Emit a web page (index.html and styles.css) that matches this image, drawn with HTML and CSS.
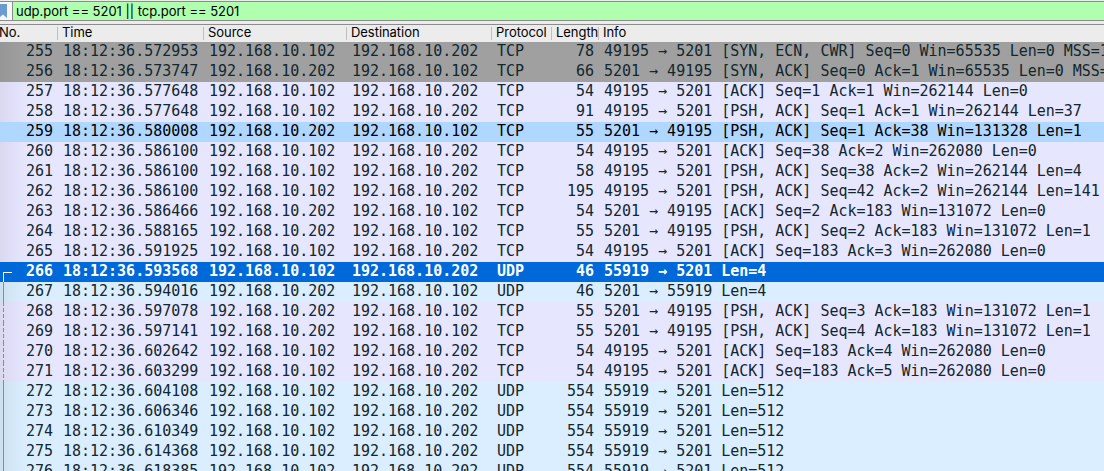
FILE: index.html
```html
<!DOCTYPE html>
<html lang="en">
<head>
  <meta charset="UTF-8">
  <title>Packet list</title>
  <link rel="stylesheet" href="styles.css">
</head>
<body>

  <div class="filter-bar">
    <div class="bookmark">
      <svg width="8" height="16" viewBox="0 0 8 16"><path d="M0 0H7V14L3 10.5L0 13Z" fill="#6c9bd0"/></svg>
    </div>
    <div class="filter-text">udp.port == 5201 || tcp.port == 5201</div>
  </div>

  <table class="packets">
    <colgroup>
      <col class="c-no"><col class="c-time"><col class="c-addr"><col class="c-dest"><col class="c-proto"><col class="c-len"><col>
    </colgroup>
    <thead>
      <tr><th>No.</th><th>Time</th><th>Source</th><th>Destination</th><th>Protocol</th><th>Length</th><th>Info</th></tr>
    </thead>
    <tbody>
      <tr class="syn"><td>255</td><td>18:12:36.572953</td><td>192.168.10.102</td><td>192.168.10.202</td><td>TCP</td><td>78</td><td>49195 → 5201 [SYN, ECN, CWR] Seq=0 Win=65535 Len=0 MSS=1</td></tr>
      <tr class="syn"><td>256</td><td>18:12:36.573747</td><td>192.168.10.202</td><td>192.168.10.102</td><td>TCP</td><td>66</td><td>5201 → 49195 [SYN, ACK] Seq=0 Ack=1 Win=65535 Len=0 MSS=</td></tr>
      <tr class="tcp"><td>257</td><td>18:12:36.577648</td><td>192.168.10.102</td><td>192.168.10.202</td><td>TCP</td><td>54</td><td>49195 → 5201 [ACK] Seq=1 Ack=1 Win=262144 Len=0</td></tr>
      <tr class="tcp"><td>258</td><td>18:12:36.577648</td><td>192.168.10.102</td><td>192.168.10.202</td><td>TCP</td><td>91</td><td>49195 → 5201 [PSH, ACK] Seq=1 Ack=1 Win=262144 Len=37</td></tr>
      <tr class="hover"><td>259</td><td>18:12:36.580008</td><td>192.168.10.202</td><td>192.168.10.102</td><td>TCP</td><td>55</td><td>5201 → 49195 [PSH, ACK] Seq=1 Ack=38 Win=131328 Len=1</td></tr>
      <tr class="tcp"><td>260</td><td>18:12:36.586100</td><td>192.168.10.102</td><td>192.168.10.202</td><td>TCP</td><td>54</td><td>49195 → 5201 [ACK] Seq=38 Ack=2 Win=262080 Len=0</td></tr>
      <tr class="tcp"><td>261</td><td>18:12:36.586100</td><td>192.168.10.102</td><td>192.168.10.202</td><td>TCP</td><td>58</td><td>49195 → 5201 [PSH, ACK] Seq=38 Ack=2 Win=262144 Len=4</td></tr>
      <tr class="tcp"><td>262</td><td>18:12:36.586100</td><td>192.168.10.102</td><td>192.168.10.202</td><td>TCP</td><td>195</td><td>49195 → 5201 [PSH, ACK] Seq=42 Ack=2 Win=262144 Len=141</td></tr>
      <tr class="tcp"><td>263</td><td>18:12:36.586466</td><td>192.168.10.202</td><td>192.168.10.102</td><td>TCP</td><td>54</td><td>5201 → 49195 [ACK] Seq=2 Ack=183 Win=131072 Len=0</td></tr>
      <tr class="tcp"><td>264</td><td>18:12:36.588165</td><td>192.168.10.202</td><td>192.168.10.102</td><td>TCP</td><td>55</td><td>5201 → 49195 [PSH, ACK] Seq=2 Ack=183 Win=131072 Len=1</td></tr>
      <tr class="tcp"><td>265</td><td>18:12:36.591925</td><td>192.168.10.102</td><td>192.168.10.202</td><td>TCP</td><td>54</td><td>49195 → 5201 [ACK] Seq=183 Ack=3 Win=262080 Len=0</td></tr>
      <tr class="selected"><td>266</td><td>18:12:36.593568</td><td>192.168.10.102</td><td>192.168.10.202</td><td>UDP</td><td>46</td><td>55919 → 5201 Len=4</td></tr>
      <tr class="udp related"><td>267</td><td>18:12:36.594016</td><td>192.168.10.202</td><td>192.168.10.102</td><td>UDP</td><td>46</td><td>5201 → 55919 Len=4</td></tr>
      <tr class="tcp between"><td>268</td><td>18:12:36.597078</td><td>192.168.10.202</td><td>192.168.10.102</td><td>TCP</td><td>55</td><td>5201 → 49195 [PSH, ACK] Seq=3 Ack=183 Win=131072 Len=1</td></tr>
      <tr class="tcp between"><td>269</td><td>18:12:36.597141</td><td>192.168.10.202</td><td>192.168.10.102</td><td>TCP</td><td>55</td><td>5201 → 49195 [PSH, ACK] Seq=4 Ack=183 Win=131072 Len=1</td></tr>
      <tr class="tcp between"><td>270</td><td>18:12:36.602642</td><td>192.168.10.102</td><td>192.168.10.202</td><td>TCP</td><td>54</td><td>49195 → 5201 [ACK] Seq=183 Ack=4 Win=262080 Len=0</td></tr>
      <tr class="tcp between"><td>271</td><td>18:12:36.603299</td><td>192.168.10.102</td><td>192.168.10.202</td><td>TCP</td><td>54</td><td>49195 → 5201 [ACK] Seq=183 Ack=5 Win=262080 Len=0</td></tr>
      <tr class="udp related"><td>272</td><td>18:12:36.604108</td><td>192.168.10.102</td><td>192.168.10.202</td><td>UDP</td><td>554</td><td>55919 → 5201 Len=512</td></tr>
      <tr class="udp related"><td>273</td><td>18:12:36.606346</td><td>192.168.10.102</td><td>192.168.10.202</td><td>UDP</td><td>554</td><td>55919 → 5201 Len=512</td></tr>
      <tr class="udp related"><td>274</td><td>18:12:36.610349</td><td>192.168.10.102</td><td>192.168.10.202</td><td>UDP</td><td>554</td><td>55919 → 5201 Len=512</td></tr>
      <tr class="udp related"><td>275</td><td>18:12:36.614368</td><td>192.168.10.102</td><td>192.168.10.202</td><td>UDP</td><td>554</td><td>55919 → 5201 Len=512</td></tr>
      <tr class="udp related"><td>276</td><td>18:12:36.618385</td><td>192.168.10.102</td><td>192.168.10.202</td><td>UDP</td><td>554</td><td>55919 → 5201 Len=512</td></tr>
    </tbody>
  </table>

</body>
</html>
```
FILE: styles.css
```css
body {
  margin: 0;
  height: 471px;
  overflow: hidden;
  background: #ececec;
  font-family: Inter, "Liberation Sans", sans-serif;
}

.filter-bar {
  display: flex;
  box-sizing: border-box;
  height: 20px;
  margin-top: 1px;
  border-top: 1px solid #8c8c8c;
  border-bottom: 1px solid #8c8c8c;
  background: #afffaf;
}

.bookmark {
  width: 12px;
  padding-top: 2px;
  background: #f6f6f6;
  border-right: 1px solid #8c8c8c;
}

.bookmark svg {
  display: block;
}

.filter-text {
  padding-left: 3px;
  font-size: 13px;
  letter-spacing: -0.03px;
  line-height: 19px;
  white-space: pre;
  color: #000;
}

.packets {
  width: 1104px;
  margin-top: 3px;
  border-top: 1px solid #8c8c8c;
  border-spacing: 0;
  table-layout: fixed;
}

.c-no { width: 58px; }
.c-time { width: 146px; }
.c-addr { width: 143px; }
.c-dest { width: 145px; }
.c-proto { width: 60px; }
.c-len { width: 47px; }

th {
  position: relative;
  height: 17px;
  padding: 0 0 0 4px;
  font-size: 13px;
  font-weight: 400;
  letter-spacing: -0.05px;
  line-height: 15px;
  text-align: left;
  vertical-align: top;
  white-space: nowrap;
  overflow: hidden;
  color: #000;
}

th:first-child {
  padding-left: 0;
  text-indent: -1px;
}

/* column separators */
th:not(:last-child)::after {
  content: "";
  position: absolute;
  top: 2px;
  right: 0;
  width: 1px;
  height: 13px;
  background: #bfbfbf;
}

td {
  height: 20px;
  padding: 0 0 0 5px;
  font-family: "DejaVu Sans Mono", monospace;
  font-size: 15px;
  letter-spacing: -0.015px;
  line-height: 18px;
  vertical-align: top;
  white-space: nowrap;
  overflow: hidden;
  color: #12272e;
}

td:first-child {
  position: relative;
  padding: 0 5px 0 0;
  text-align: right;
  background: linear-gradient(to right, rgba(0, 0, 0, 0.06), transparent 26px);
}

td:nth-child(6) {
  padding: 0 5px 0 0;
  text-align: right;
}

.syn { background: #a0a0a0; }
.tcp { background: #e7e6ff; }
.udp { background: #daeeff; }
.hover { background: #b0d7ff; }
.hover td { color: #000; }
.selected { background: #0069d9; }

.hover td:first-child,
.selected td:first-child {
  background: none;
}

.selected td {
  color: #fff;
  font-weight: 700;
}

/* conversation line beside the packet numbers */
.related td:first-child::before,
.between td:first-child::before,
.selected td:first-child::before {
  content: "";
  position: absolute;
  top: 0;
  bottom: 0;
  left: 3px;
  width: 8px;
  border-left: 1px solid #828f99;
}

.between td:first-child::before {
  width: 1px;
  border: 0;
  background: repeating-linear-gradient(to bottom, #8a8a99 0, #8a8a99 4px, transparent 4px, transparent 6px);
}

.selected td:first-child::before {
  top: 10px;
  border-left-color: #fff;
  border-top: 1px solid #fff;
}
```
